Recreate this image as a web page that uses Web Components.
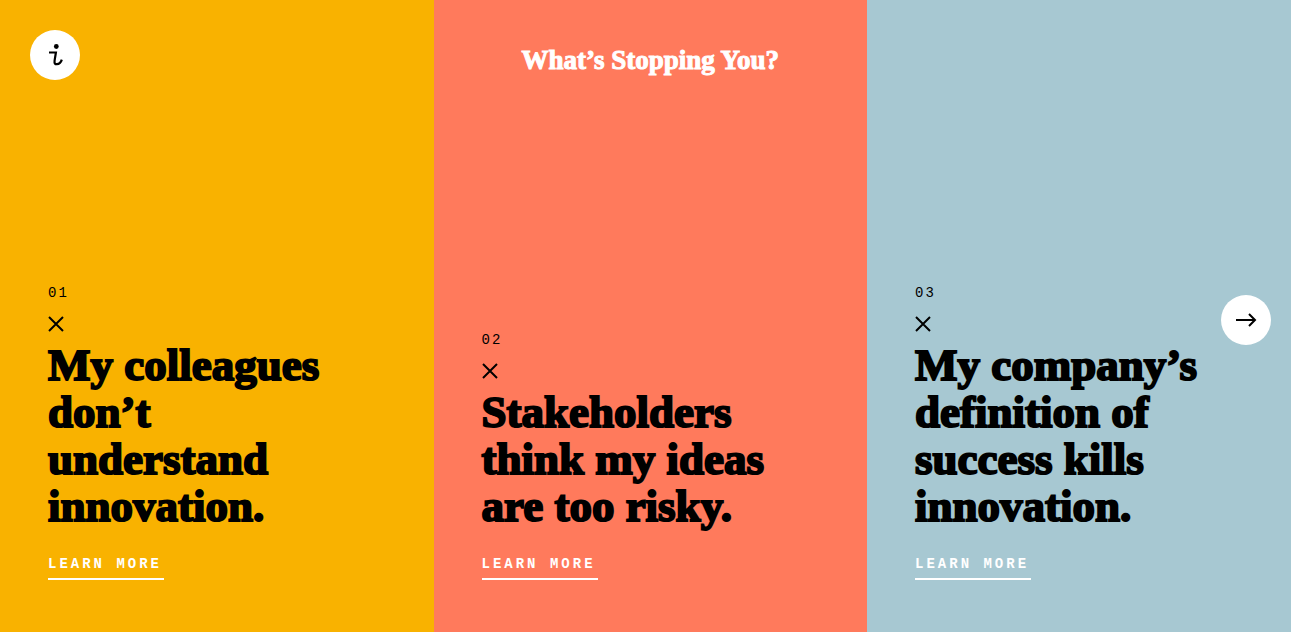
<!DOCTYPE html>
<html lang="en">
<head>
<meta charset="utf-8">
<meta name="viewport" content="width=device-width, initial-scale=1">
<title>What’s Stopping You?</title>
<style>
  body { margin: 0; overflow-x: hidden; font-family: "Liberation Serif", serif; color: #000; }
</style>
</head>
<body>
<excuse-board>
  <excuse-panel number="01" style="--panel: #f9b200">My colleagues don’t understand innovation.</excuse-panel>
  <excuse-panel number="02" style="--panel: #ff7a5c"><h1 slot="title">What’s Stopping You?</h1>Stakeholders think my ideas are too risky.</excuse-panel>
  <excuse-panel number="03" style="--panel: #a7c8d2">My company’s definition of success kills innovation.</excuse-panel>
  <round-button slot="info" label="About">
    <svg width="20" height="26" viewBox="0 0 20 26" fill="none" stroke="#000" stroke-width="2.2"><circle cx="11.3" cy="4.5" r="2.4" fill="#000" stroke="none"/><path d="M4 10.5H10.9L9.6 18.6C9.2 21.4 10.2 22.4 11.8 22.2C14.4 22 16 20.4 16.8 17.6"/></svg>
  </round-button>
  <round-button slot="next" label="Next">
    <svg width="22" height="16" viewBox="0 0 22 16" fill="none" stroke="#000" stroke-width="2"><path d="M1 8H20M14 2L20 8L14 14"/></svg>
  </round-button>
</excuse-board>

<script>
class ExcuseBoard extends HTMLElement {
  constructor() {
    super();
    this.attachShadow({ mode: 'open' }).innerHTML = `
      <style>
        :host { display: block; position: relative; overflow: hidden; }
        main { display: grid; grid-template-columns: repeat(3, 33.58%); min-height: 100vh; }
        slot[name="info"]::slotted(*) { position: absolute; top: 30px; left: 30px; }
        slot[name="next"]::slotted(*) { position: absolute; top: calc(50% - 21px); right: 20px; }
      </style>
      <main><slot></slot></main>
      <slot name="info"></slot>
      <slot name="next"></slot>`;
  }
}

class ExcusePanel extends HTMLElement {
  constructor() {
    super();
    this.attachShadow({ mode: 'open' }).innerHTML = `
      <style>
        :host { display: flex; flex-direction: column; justify-content: space-between;
          box-sizing: border-box; padding: 44px 48px 52px; background: var(--panel); }
        header { min-height: 32px; }
        ::slotted(h1) { margin: 0; font-size: 27px; line-height: 32px; font-weight: 700;
          text-align: center; color: #fff; -webkit-text-stroke: 1px #fff; }
        .number { margin: 0; font: 14px/24px "Liberation Mono", monospace; letter-spacing: 2px; }
        svg { display: block; margin: 11px 0 10px; }
        h2 { margin: 0 0 20px; padding-right: 16px; font-size: 45px; line-height: 47px;
          font-weight: 700; -webkit-text-stroke: 2px #000; }
        a { display: inline-block; border-bottom: 2px solid #fff; color: #fff;
          font: bold 14px/24px "Liberation Mono", monospace; letter-spacing: 3px;
          padding: 2px 2px 2px 0; text-decoration: none; vertical-align: top; }
      </style>
      <header><slot name="title"></slot></header>
      <article>
        <p class="number"></p>
        <svg width="16" height="16" viewBox="0 0 16 16" stroke="#000" stroke-width="2" aria-hidden="true"><path d="M1 1L15 15M15 1L1 15"/></svg>
        <h2><slot></slot></h2>
        <a href="#">LEARN MORE</a>
      </article>`;
  }
  connectedCallback() {
    this.shadowRoot.querySelector('.number').textContent = this.getAttribute('number');
  }
}

class RoundButton extends HTMLElement {
  constructor() {
    super();
    this.attachShadow({ mode: 'open' }).innerHTML = `
      <style>
        :host { display: block; }
        button { display: grid; place-items: center; width: 50px; height: 50px; padding: 0;
          border: 0; border-radius: 50%; background: #fff; cursor: pointer; }
      </style>
      <button type="button"><slot></slot></button>`;
  }
  connectedCallback() {
    this.shadowRoot.querySelector('button').setAttribute('aria-label', this.getAttribute('label'));
  }
}

customElements.define('excuse-board', ExcuseBoard);
customElements.define('excuse-panel', ExcusePanel);
customElements.define('round-button', RoundButton);
</script>
</body>
</html>
